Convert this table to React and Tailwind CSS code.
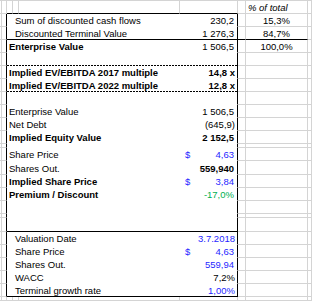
import React from 'react';

// one sheet row = 9 excel columns (A..I), box spans C..F
const COLS = "grid grid-cols-[2px_5px_6px_6px_161px_58px_8px_62px_4px]";
const GRID = "border-r border-b border-[#d4d4d4]";

const tones = {
  black: "text-black",
  blue: "text-[#1f1fff]",
  green: "text-[#00b050]",
};

const rows = [
  { h: "h-[13px]", label: "Sum of discounted cash flows", indent: true, value: "230,2", pct: "15,3%" },
  { h: "h-[13px]", label: "Discounted Terminal Value", indent: true, value: "1 276,3", pct: "84,7%", edge: "solid", pctEdge: true },
  { h: "h-[13px]", label: "Enterprise Value", bold: true, value: "1 506,5", pct: "100,0%" },
  { h: "h-[13px]", edge: "dashed" },
  { h: "h-[13px]", label: "Implied EV/EBITDA 2017 multiple", bold: true, value: "14,8 x", valueBold: true, pr: "pr-[2px]" },
  { h: "h-[13px]", label: "Implied EV/EBITDA 2022 multiple", bold: true, value: "12,8 x", valueBold: true, pr: "pr-[2px]", edge: "dashed" },
  { h: "h-[13px]" },
  { h: "h-[13px]", label: "Enterprise Value", value: "1 506,5" },
  { h: "h-[13px]", label: "Net Debt", value: "(645,9)", pr: "pr-[2px]" },
  { h: "h-[13px]", label: "Implied Equity Value", bold: true, value: "2 152,5", valueBold: true },
  { h: "h-[4px]" },
  { h: "h-[13px]", label: "Share Price", value: "4,63", dollar: true, tone: "blue" },
  { h: "h-[14px]", label: "Shares Out.", value: "559,940", valueBold: true },
  { h: "h-[13px]", label: "Implied Share Price", bold: true, value: "3,84", dollar: true, tone: "blue" },
  { h: "h-[13px]", label: "Premium / Discount", bold: true, value: "-17,0%", tone: "green" },
  { h: "h-[13px]" },
  { h: "h-[4px]" },
  { h: "h-[14px]", edge: "solid" },
  { h: "h-[13px]", label: "Valuation Date", indent: true, value: "3.7.2018", tone: "blue", pr: "pr-[2px]" },
  { h: "h-[13px]", label: "Share Price", indent: true, value: "4,63", dollar: true, tone: "blue" },
  { h: "h-[13px]", label: "Shares Out.", indent: true, value: "559,94", tone: "blue" },
  { h: "h-[13px]", label: "WACC", indent: true, value: "7,2%", pr: "pr-[2px]" },
  { h: "h-[13px]", label: "Terminal growth rate", indent: true, value: "1,00%", tone: "blue", pr: "pr-[2px]", edge: "solid" },
];

const BoxRow = ({ row }) => {
  const { h, label, indent, bold, value, valueBold, dollar, tone = "black", pr = "pr-[3px]", edge, pct, pctEdge } = row;
  const edgeClass = edge === "solid" ? "border-b border-black" : edge === "dashed" ? "" : "border-b border-white";
  const sideEdge = pctEdge ? "border-r border-b border-r-[#d4d4d4] border-b-black" : GRID;

  return (
    <div className={`${COLS} ${h}`}>
      <div className={GRID} />
      <div className="border-b border-r border-b-[#d4d4d4] border-r-black" />
      <div className={`col-span-4 flex flex-col bg-white border-r border-r-black ${edgeClass}`}>
        <div className="flex flex-1 items-end whitespace-nowrap">
          <div className={`flex-1 ${indent ? "pl-[8px]" : "pl-[2px]"} ${bold ? "font-bold" : ""}`}>{label}</div>
          {value && (
            <div className={`flex w-[57px] justify-between ${tones[tone]}`}>
              <span className="pl-[5px]">{dollar ? "$" : ""}</span>
              <span className={`${pr} ${valueBold ? "font-bold" : ""}`}>{value}</span>
            </div>
          )}
        </div>
        {edge === "dashed" && (
          <div className="h-px bg-[repeating-linear-gradient(to_right,#000_0_2px,transparent_2px_3px)]" />
        )}
      </div>
      <div className={sideEdge} />
      <div className={`${sideEdge} flex items-end justify-center`}>{pct}</div>
      <div className={GRID} />
    </div>
  );
};

const PlainRow = ({ h, topEdge }) => (
  <div className={`${COLS} ${h}`}>
    <div className={GRID} />
    <div className={GRID} />
    {[0, 1, 2, 3].map((i) => (
      <div key={i} className={topEdge ? "border-r border-b border-r-[#d4d4d4] border-b-black" : GRID} />
    ))}
    <div className={GRID} />
    <div className={GRID} />
    <div className={GRID} />
  </div>
);

const App = () => {
  return (
    <div className="w-[312px] h-[301px] overflow-hidden bg-white font-['Liberation_Sans',Arial,sans-serif] text-[9.5px] leading-[11px] text-black">
      {/* header row with % of total */}
      <div className={`${COLS} h-[14px] border-t border-[#d4d4d4]`}>
        <div className={GRID} />
        <div className={GRID} />
        <div className="border-r border-b border-r-[#d4d4d4] border-b-black" />
        <div className="border-r border-b border-r-[#d4d4d4] border-b-black" />
        <div className="border-r border-b border-r-[#d4d4d4] border-b-black" />
        <div className="border-r border-b border-r-[#d4d4d4] border-b-black" />
        <div className={GRID} />
        <div className={`${GRID} flex items-end pl-[2px] italic`}>% of total</div>
        <div className={GRID} />
      </div>

      {rows.map((row, i) => (
        <BoxRow key={i} row={row} />
      ))}

      <PlainRow h="h-[4px]" />
      <PlainRow h="h-[13px]" />
    </div>
  );
};

export default App;
